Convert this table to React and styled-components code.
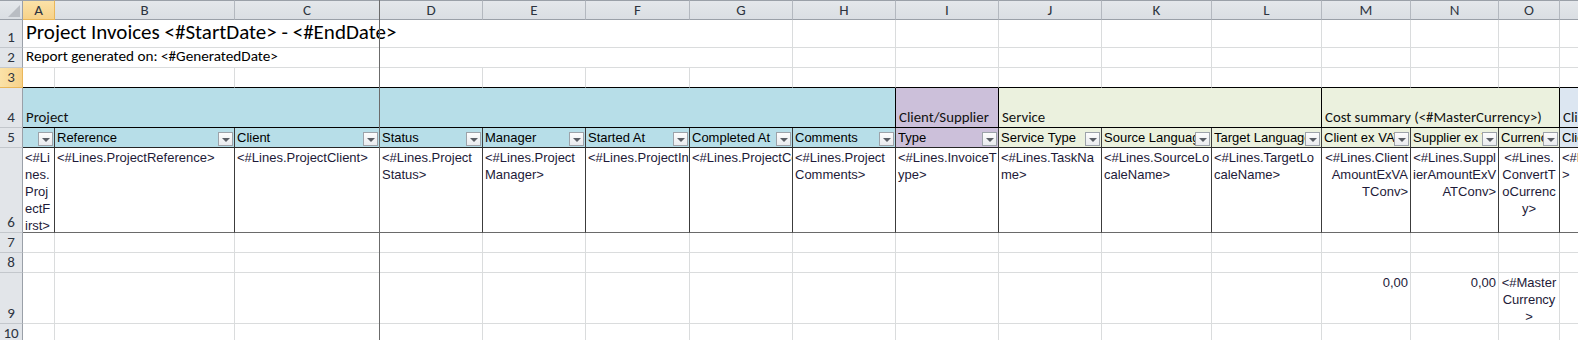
import React from 'react';
import styled, { createGlobalStyle } from 'styled-components';

const GlobalStyle = createGlobalStyle`
  html, body {
    margin: 0;
    padding: 0;
    background: #fff;
    overflow: hidden;
  }
`;

// column widths (row header + A..P) and row heights (col header + 1..10)
const COLS = [23, 32, 180, 145, 103, 103, 104, 103, 103, 103, 103, 110, 110, 89, 88, 61, 60];
const ROWS = [20, 28, 20, 20, 40, 20, 85, 20, 20, 51, 20];
const LETTERS = 'ABCDEFGHIJKLMNOP'.split('');

const GRID = '#dadcdd';
const DARK = '#3c3c3c';
const BLACK = '#000';

const BLUE = '#b7dee8';
const PURPLE = '#ccc0da';
const GREEN = '#ebf1de';
const PALE = '#dce6f1';

const calibri = `Carlito, Lato, "Open Sans", sans-serif`;
const arial = `"Liberation Sans", Arial, sans-serif`;

const Sheet = styled.div`
  position: relative;
  display: grid;
  grid-template-columns: ${COLS.map((c) => c + 'px').join(' ')};
  grid-template-rows: ${ROWS.map((r) => r + 'px').join(' ')};
  width: max-content;
`;

const Corner = styled.div`
  position: relative;
  box-sizing: border-box;
  background: linear-gradient(#e4e7eb, #dadee3);
  border-top: 1px solid #9aa0a8;
  border-right: 1px solid #9aa0a8;
  border-bottom: 1px solid #9aa0a8;
  &::after {
    content: '';
    position: absolute;
    right: 2px;
    bottom: 2px;
    border-left: 12px solid transparent;
    border-bottom: 12px solid #b9bdc3;
  }
`;

const ColHead = styled.div`
  box-sizing: border-box;
  display: flex;
  align-items: center;
  justify-content: center;
  font: 15px ${calibri};
  color: #2d3440;
  background: ${(p) => (p.$active ? 'linear-gradient(#fbe2a8, #f7d28a)' : 'linear-gradient(#e4e7eb, #dadee3)')};
  border-top: 1px solid #9aa0a8;
  border-right: 1px solid ${(p) => (p.$active ? '#eab75a' : '#b3b8bf')};
  border-bottom: 1px solid ${(p) => (p.$active ? '#eab75a' : '#9aa0a8')};
`;

const RowHead = styled.div`
  box-sizing: border-box;
  display: flex;
  align-items: flex-end;
  justify-content: center;
  padding-bottom: 1px;
  font: 15px/17px ${calibri};
  color: #2d3440;
  background: ${(p) => (p.$active ? 'linear-gradient(90deg, #fbe2a8, #f7d28a)' : '#e2e5e9')};
  border-right: 1px solid ${(p) => (p.$active ? '#eab75a' : '#9aa0a8')};
  border-bottom: 1px solid ${(p) => (p.$active ? '#eab75a' : '#c3c7cc')};
`;

const Cell = styled.div`
  box-sizing: border-box;
  grid-column: span ${(p) => p.$span || 1};
  min-width: 0;
  overflow: hidden;
  background: ${(p) => p.$bg || '#fff'};
  border-right: 1px solid ${(p) => p.$r || GRID};
  border-bottom: 1px solid ${(p) => p.$b || GRID};
`;

const TitleCell = styled(Cell)`
  display: flex;
  align-items: flex-end;
  padding: 0 0 2px 3px;
  overflow: visible;
  white-space: nowrap;
  font: ${(p) => (p.$big ? '21px/25px' : '15.2px/17px')} ${calibri};
  color: #000;
`;

const GroupCell = styled(Cell)`
  display: flex;
  align-items: flex-end;
  padding: 0 0 1px 3px;
  white-space: nowrap;
  font: 400 14.8px/17px ${calibri};
  color: #111;
`;

const HeadCell = styled(Cell)`
  display: flex;
  align-items: flex-end;
  padding: 0 1px 1px 2px;
  font: 13px/16px ${arial};
  color: #000;
`;

const HeadLabel = styled.span`
  flex: 1;
  min-width: 0;
  overflow: hidden;
  white-space: nowrap;
`;

const FilterBtn = styled.span`
  flex: none;
  box-sizing: border-box;
  width: 15px;
  height: 14px;
  display: flex;
  align-items: center;
  justify-content: center;
  background: linear-gradient(#fdfdfd, #e9ebee);
  border: 1px solid #9da3aa;
  &::after {
    content: '';
    border-left: 4px solid transparent;
    border-right: 4px solid transparent;
    border-top: 4px solid #5b5f66;
    margin-top: 1px;
  }
`;

const DataCell = styled(Cell)`
  padding: 1px 2px;
  font: 13px/17px ${arial};
  color: #1d1a38;
  text-align: ${(p) => p.$align || 'left'};
  white-space: nowrap;
`;

const FreezeLine = styled.div`
  position: absolute;
  left: 379px;
  top: 0;
  bottom: 0;
  width: 1px;
  background: #6b6b6b;
`;

const groups = [
  { span: 3, bg: BLUE, label: 'Project', r: BLUE },
  { span: 5, bg: BLUE, label: '', r: BLACK },
  { span: 1, bg: PURPLE, label: 'Client/Supplier', r: BLACK },
  { span: 3, bg: GREEN, label: 'Service', r: BLACK },
  { span: 3, bg: GREEN, label: 'Cost summary (<#MasterCurrency>)', r: BLACK },
  { span: 1, bg: PALE, label: 'Client', r: BLACK },
];

const headers = [
  { label: '', bg: BLUE },
  { label: 'Reference', bg: BLUE },
  { label: 'Client', bg: BLUE },
  { label: 'Status', bg: BLUE },
  { label: 'Manager', bg: BLUE },
  { label: 'Started At', bg: BLUE },
  { label: 'Completed At', bg: BLUE },
  { label: 'Comments', bg: BLUE },
  { label: 'Type', bg: PURPLE },
  { label: 'Service Type', bg: GREEN },
  { label: 'Source Language', bg: GREEN },
  { label: 'Target Language', bg: GREEN },
  { label: 'Client ex VAT', bg: GREEN },
  { label: 'Supplier ex VAT', bg: GREEN },
  { label: 'Currency', bg: GREEN },
  { label: 'Client', bg: PALE },
];

const lines = [
  { text: ['<#Li', 'nes.', 'Proj', 'ectF', 'irst>'] },
  { text: ['<#Lines.ProjectReference>'] },
  { text: ['<#Lines.ProjectClient>'] },
  { text: ['<#Lines.Project', 'Status>'] },
  { text: ['<#Lines.Project', 'Manager>'] },
  { text: ['<#Lines.ProjectInvoiceStart>'] },
  { text: ['<#Lines.ProjectCompleted>'] },
  { text: ['<#Lines.Project', 'Comments>'] },
  { text: ['<#Lines.InvoiceT', 'ype>'] },
  { text: ['<#Lines.TaskNa', 'me>'] },
  { text: ['<#Lines.SourceLo', 'caleName>'] },
  { text: ['<#Lines.TargetLo', 'caleName>'] },
  { text: ['<#Lines.Client', 'AmountExVA', 'TConv>'], align: 'right' },
  { text: ['<#Lines.Suppl', 'ierAmountExV', 'ATConv>'], align: 'right' },
  { text: ['<#Lines.', 'ConvertT', 'oCurrenc', 'y>'], align: 'center' },
  { text: ['<#Li', '>'] },
];

const totals = {
  M: { text: ['0,00'], align: 'right' },
  N: { text: ['0,00'], align: 'right' },
  O: { text: ['<#Master', 'Currency', '>'], align: 'center' },
};

const Lines = ({ text }) =>
  text.map((t, i) => (
    <React.Fragment key={i}>
      {i > 0 && <br />}
      {t}
    </React.Fragment>
  ));

const plainRow = (n, opts = {}) =>
  LETTERS.map((l) => <Cell key={l + n} $b={opts.b} />);

const App = () => {
  return (
    <>
      <GlobalStyle />
      <Sheet>
        <Corner />
        {LETTERS.map((l) => (
          <ColHead key={l} $active={l === 'A'}>
            {l}
          </ColHead>
        ))}

        <RowHead>1</RowHead>
        <TitleCell $span={7} $big>
          Project Invoices &lt;#StartDate&gt; - &lt;#EndDate&gt;
        </TitleCell>
        {LETTERS.slice(7).map((l) => (
          <Cell key={l + 1} />
        ))}

        <RowHead>2</RowHead>
        <TitleCell $span={7}>Report generated on: &lt;#GeneratedDate&gt;</TitleCell>
        {LETTERS.slice(7).map((l) => (
          <Cell key={l + 2} />
        ))}

        <RowHead $active>3</RowHead>
        {plainRow(3, { b: BLACK })}

        <RowHead>4</RowHead>
        {groups.map((g, i) => (
          <GroupCell key={i} $span={g.span} $bg={g.bg} $r={g.r} $b={BLACK}>
            {g.label}
          </GroupCell>
        ))}

        <RowHead>5</RowHead>
        {headers.map((h, i) => (
          <HeadCell key={i} $bg={h.bg} $r={DARK} $b="#262626">
            <HeadLabel>{h.label}</HeadLabel>
            <FilterBtn />
          </HeadCell>
        ))}

        <RowHead>6</RowHead>
        {lines.map((c, i) => (
          <DataCell key={i} $align={c.align} $r={DARK} $b="#6a6a6a">
            <Lines text={c.text} />
          </DataCell>
        ))}

        <RowHead>7</RowHead>
        {plainRow(7)}

        <RowHead>8</RowHead>
        {plainRow(8)}

        <RowHead>9</RowHead>
        {LETTERS.map((l) =>
          totals[l] ? (
            <DataCell key={l + 9} $align={totals[l].align}>
              <Lines text={totals[l].text} />
            </DataCell>
          ) : (
            <Cell key={l + 9} />
          )
        )}

        <RowHead>10</RowHead>
        {plainRow(10)}

        <FreezeLine />
      </Sheet>
    </>
  );
};

export default App;
